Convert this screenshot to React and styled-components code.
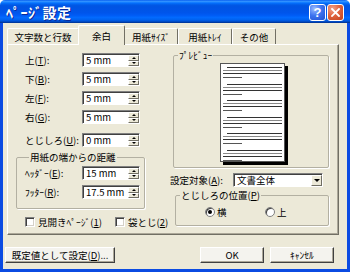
import React from 'react';
import styled, { createGlobalStyle } from 'styled-components';

const FONT = `"Noto Sans CJK JP", "Noto Sans", sans-serif`;

const GlobalStyle = createGlobalStyle`
  html, body { margin: 0; padding: 0; background: #ffffff; }
  body { font-family: ${FONT}; font-size: 9.5px; color: #000; }
  * { box-sizing: border-box; }
`;

const Window = styled.div`
  width: 350px;
  height: 272px;
  display: flex;
  flex-direction: column;
  overflow: hidden;
`;

const TitleBar = styled.div`
  height: 23px;
  flex: none;
  display: flex;
  align-items: center;
  padding: 1px 6px 0 6px;
  background: linear-gradient(to bottom, #0058ee 0%, #3593ff 5%, #288eff 8%, #127dff 11%, #036ffc 14%, #0262ee 18%, #0057e5 24%, #0054e3 30%, #0055eb 56%, #005bf5 66%, #026afe 76%, #0062ef 86%, #0052d6 92%, #0040ab 96%, #003092 100%);
  border-radius: 5px 5px 0 0;
`;

const Title = styled.div`
  flex: 1;
  color: #fff;
  font-weight: 700;
  font-size: 14px;
  letter-spacing: 0.5px;
  line-height: 15px;
  text-shadow: 1px 1px 0 #0a2a9a;
`;

const CaptionButton = styled.div`
  width: 17px;
  height: 17px;
  border: 1px solid #fff;
  border-radius: 3px;
  display: flex;
  align-items: center;
  justify-content: center;
  color: #fff;
  font-family: "Liberation Sans", sans-serif;
  font-weight: 700;
  font-size: 13px;
  line-height: 1;
  background: ${p => p.$close
    ? 'radial-gradient(circle at 30% 25%, #f1a28b 0%, #e0643f 45%, #c2401a 100%)'
    : 'radial-gradient(circle at 30% 25%, #9cbcff 0%, #3e74f0 45%, #1f4fd0 100%)'};
  & + & { margin-left: 1px; }
`;

const Frame = styled.div`
  flex: 1;
  display: flex;
  flex-direction: column;
  background: #ece9d8;
  border: 3px solid #0b4be2;
  border-top: none;
  padding: 2px 8px 0 4px;
`;

const TabStrip = styled.div`
  height: 20px;
  display: flex;
  align-items: flex-end;
  position: relative;
  z-index: 2;
  margin-bottom: -1px;
`;

const Tab = styled.div`
  width: ${p => p.$w}px;
  height: ${p => (p.$active ? 20 : 16)}px;
  margin: ${p => (p.$active ? '0 -1px 0 -1px' : '0 0 1px 0')};
  padding-bottom: ${p => (p.$active ? 3 : 1)}px;
  display: flex;
  align-items: flex-end;
  justify-content: center;
  line-height: 12px;
  background: #ece9d8;
  border: 1px solid;
  border-color: #fff #716f64 transparent #fff;
  border-bottom: none;
  border-radius: 2px 2px 0 0;
  position: relative;
  z-index: ${p => (p.$active ? 2 : 1)};
`;

const Panel = styled.div`
  height: 191px;
  flex: none;
  position: relative;
  z-index: 1;
  display: flex;
  padding: 4px 0 0 8px;
  background: #ece9d8;
  border: 1px solid;
  border-color: #fff #716f64 #716f64 #fff;
  box-shadow: inset -1px -1px 0 #aca899;
`;

const LeftCol = styled.div`
  width: 129px;
  flex: none;
  display: flex;
  flex-direction: column;
  padding-top: 4px;
`;

const RightCol = styled.div`
  width: 160px;
  flex: none;
  margin-left: 25px;
  display: flex;
  flex-direction: column;
`;

const FieldRow = styled.div`
  display: grid;
  grid-template-columns: ${p => p.$label}px ${p => p.$field}px;
  align-items: center;
  height: 14px;
  margin: ${p => p.$mt || 0}px 0 0 ${p => p.$ml || 0}px;
`;

const Label = styled.span`
  line-height: 12px;
  white-space: nowrap;
`;

const Key = styled.u`
  text-decoration: underline;
  text-underline-offset: 1px;
`;

const Sunken = styled.div`
  display: flex;
  height: 14px;
  background: #fff;
  border: 1px solid;
  border-color: #808080 #fff #fff #808080;
  box-shadow: inset 1px 1px 0 #404040;
`;

const FieldValue = styled.span`
  flex: 1;
  padding: 1px 0 0 3px;
  line-height: 11px;
  white-space: nowrap;
`;

const SpinButtons = styled.div`
  width: 11px;
  display: flex;
  flex-direction: column;
  padding: 1px 0 0 0;
`;

const RaisedButton = styled.div`
  flex: 1;
  display: flex;
  align-items: center;
  justify-content: center;
  background: #ece9d8;
  border: 1px solid;
  border-color: #fff #716f64 #716f64 #fff;
`;

const Arrow = styled.span`
  width: 0;
  height: 0;
  border-left: ${p => p.$size}px solid transparent;
  border-right: ${p => p.$size}px solid transparent;
  ${p => (p.$down
    ? `border-top: ${p.$size}px solid #000;`
    : `border-bottom: ${p.$size}px solid #000;`)}
`;

const DropButton = styled(RaisedButton)`
  flex: none;
  width: 11px;
  margin-top: 1px;
`;

const Group = styled.fieldset`
  margin: ${p => p.$m};
  padding: ${p => p.$pad};
  width: ${p => p.$w}px;
  height: ${p => p.$h}px;
  min-width: 0;
  border: 1px solid #b3b0a2;
  border-radius: 2px;
  box-shadow: 1px 1px 0 #fff;
`;

const Legend = styled.legend`
  padding: 0 1px;
  margin-left: 4px;
  line-height: 12px;
`;

const CheckRow = styled.div`
  display: flex;
  align-items: center;
  height: 14px;
  margin: 6px 0 0 9px;
`;

const CheckItem = styled.label`
  flex: none;
  display: flex;
  align-items: center;
  width: ${p => p.$w}px;
  line-height: 12px;
  white-space: nowrap;
`;

const CheckBox = styled.span`
  width: 10px;
  height: 10px;
  margin-right: 3px;
  background: #fff;
  border: 1px solid;
  border-color: #808080 #fff #fff #808080;
  box-shadow: inset 1px 1px 0 #404040, inset -1px -1px 0 #d4d0c8;
`;

const PreviewBody = styled.div`
  padding: 2px 0 0 46px;
`;

const RadioRow = styled.div`
  display: flex;
  align-items: center;
  height: 14px;
  padding: 0 0 0 29px;
  margin-top: 4px;
`;

const RadioItem = styled.label`
  display: flex;
  align-items: center;
  width: 60px;
  line-height: 12px;
`;

const RadioCircle = styled.span`
  width: 10px;
  height: 10px;
  margin-right: 2px;
  border-radius: 50%;
  background: #fff;
  border: 1px solid #808080;
  box-shadow: inset 1px 1px 0 #404040;
  display: flex;
  align-items: center;
  justify-content: center;
  &::after {
    content: '';
    width: 4px;
    height: 4px;
    border-radius: 50%;
    background: ${p => (p.$on ? '#000' : 'transparent')};
  }
`;

const ButtonRow = styled.div`
  display: flex;
  height: 16px;
  margin: 12px 5px 0 -2px;
`;

const PushButton = styled.div`
  width: ${p => p.$w}px;
  height: 16px;
  margin-left: ${p => p.$ml || 0};
  display: flex;
  align-items: center;
  justify-content: center;
  line-height: 12px;
  background: #f4f3ee;
  border: 1px solid;
  border-color: #fff #404040 #404040 #fff;
  box-shadow: inset -1px -1px 0 #aca899;
  white-space: nowrap;
`;

const Spin = ({ value }) => (
  <Sunken>
    <FieldValue>{value}</FieldValue>
    <SpinButtons>
      <RaisedButton><Arrow $size={2} /></RaisedButton>
      <RaisedButton><Arrow $size={2} $down /></RaisedButton>
    </SpinButtons>
  </Sunken>
);

const PagePreview = () => {
  const paras = [0, 1, 2, 3, 4, 5];
  return (
    <svg width="68" height="102" viewBox="0 0 68 102">
      <rect x="3" y="3" width="65" height="99" fill="#000" />
      <rect x="0.5" y="0.5" width="64" height="98" fill="#fff" stroke="#555" />
      {paras.map(i => {
        const y = Math.round(4 + i * 16.5);
        return (
          <g key={i}>
            <rect x="7" y={y} width="55" height="1" fill="#333" />
            <rect x="3" y={y + 3} width="59" height="1" fill="#8a8a8a" />
            <rect x="3" y={y + 6} width="59" height="1" fill="#333" />
            <rect x="3" y={y + 10} width="19" height="1" fill="#555" />
          </g>
        );
      })}
    </svg>
  );
};

const margins = [
  { label: '上', key: 'T', value: '5 mm', mt: 0 },
  { label: '下', key: 'B', value: '5 mm', mt: 5 },
  { label: '左', key: 'F', value: '5 mm', mt: 5 },
  { label: '右', key: 'G', value: '5 mm', mt: 5 },
  { label: 'とじしろ', key: 'U', value: '0 mm', mt: 9 },
];

const tabs = [
  { name: '文字数と行数', w: 72 },
  { name: '余白', w: 47, active: true },
  { name: '用紙ｻｲｽﾞ', w: 54 },
  { name: '用紙ﾄﾚｲ', w: 54 },
  { name: 'その他', w: 44 },
];

export default function App() {
  return (
    <>
      <GlobalStyle />
      <Window>
        <TitleBar>
          <Title>ﾍﾟｰｼﾞ設定</Title>
          <CaptionButton>?</CaptionButton>
          <CaptionButton $close>
            <svg width="9" height="9" viewBox="0 0 9 9">
              <path d="M1 1 L8 8 M8 1 L1 8" stroke="#fff" strokeWidth="1.8" strokeLinecap="square" />
            </svg>
          </CaptionButton>
        </TitleBar>
        <Frame>
          <TabStrip>
            {tabs.map(t => (
              <Tab key={t.name} $w={t.w} $active={t.active}>{t.name}</Tab>
            ))}
          </TabStrip>
          <Panel>
            <LeftCol>
              {margins.map(m => (
                <FieldRow key={m.key} $label={57} $field={58} $ml={9} $mt={m.mt}>
                  <Label>{m.label}(<Key>{m.key}</Key>):</Label>
                  <Spin value={m.value} />
                </FieldRow>
              ))}
              <Group $m="4px 0 0 0" $pad="3px 0 0 8px" $w={129} $h={58}>
                <Legend>用紙の端からの距離</Legend>
                <FieldRow $label={57} $field={58}>
                  <Label>ﾍｯﾀﾞｰ(<Key>E</Key>):</Label>
                  <Spin value="15 mm" />
                </FieldRow>
                <FieldRow $label={57} $field={58} $mt={5}>
                  <Label>ﾌｯﾀｰ(<Key>R</Key>):</Label>
                  <Spin value="17.5 mm" />
                </FieldRow>
              </Group>
              <CheckRow>
                <CheckItem $w={90}><CheckBox />見開きﾍﾟｰｼﾞ(<Key>1</Key>)</CheckItem>
                <CheckItem $w={60}><CheckBox />袋とじ(<Key>2</Key>)</CheckItem>
              </CheckRow>
            </LeftCol>
            <RightCol>
              <Group $m="0 0 0 3px" $pad="0" $w={156} $h={119}>
                <Legend>ﾌﾟﾚﾋﾞｭｰ</Legend>
                <PreviewBody><PagePreview /></PreviewBody>
              </Group>
              <FieldRow $label={63} $field={90} $mt={5}>
                <Label>設定対象(<Key>A</Key>):</Label>
                <Sunken>
                  <FieldValue>文書全体</FieldValue>
                  <DropButton><Arrow $size={3} $down /></DropButton>
                </Sunken>
              </FieldRow>
              <Group $m="2px 0 0 5px" $pad="0" $w={154} $h={37}>
                <Legend>とじしろの位置(<Key>P</Key>)</Legend>
                <RadioRow>
                  <RadioItem><RadioCircle $on />横</RadioItem>
                  <RadioItem><RadioCircle />上</RadioItem>
                </RadioRow>
              </Group>
            </RightCol>
          </Panel>
          <ButtonRow>
            <PushButton $w={110}>既定値として設定(<Key>D</Key>)...</PushButton>
            <PushButton $w={64} $ml="auto">OK</PushButton>
            <PushButton $w={64} $ml="6px">ｷｬﾝｾﾙ</PushButton>
          </ButtonRow>
        </Frame>
      </Window>
    </>
  );
}
